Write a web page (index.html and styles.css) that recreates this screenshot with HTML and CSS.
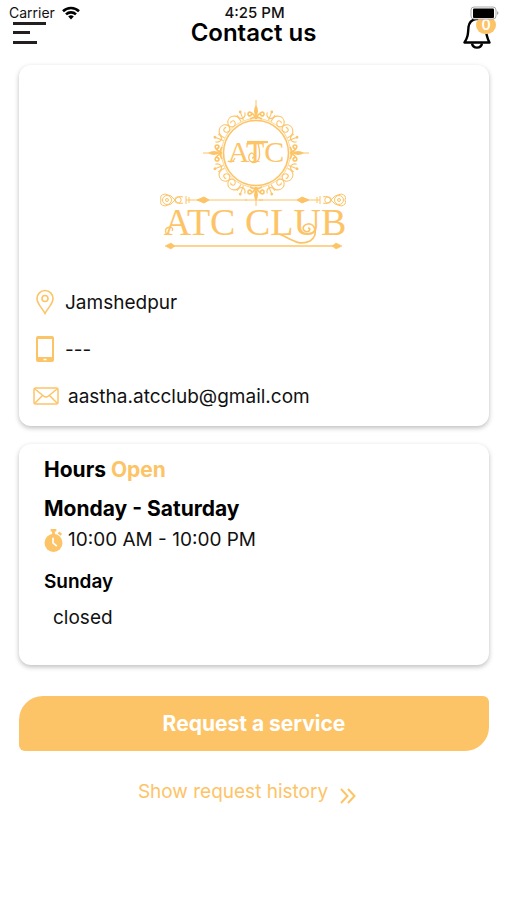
FILE: index.html
```html
<!DOCTYPE html>
<html lang="en">
<head>
    <meta charset="UTF-8">
    <meta name="viewport" content="width=device-width, initial-scale=1.0">
    <title>Contact us</title>
    <link rel="stylesheet" href="styles.css">
</head>
<body>
    <div class="status-bar">
        <div class="carrier">
            <span>Carrier</span>
            <svg width="20" height="14" viewBox="0 0 20 14" fill="none" stroke="#000" stroke-width="2.6">
                <path d="M2 5.2a11.5 11.5 0 0 1 16 0"/>
                <path d="M5 8.4a7.2 7.2 0 0 1 10 0"/>
                <path d="M7.2 10.6a4 4 0 0 1 5.6 0L10 13.6z" fill="#000" stroke="none"/>
            </svg>
        </div>
        <span class="clock">4:25 PM</span>
        <svg class="battery" width="30" height="14" viewBox="0 0 30 14">
            <rect x="1" y="1" width="25" height="12" rx="3" fill="#fff" stroke="#aaa"/>
            <rect x="3" y="2.500" width="21" height="9.500" rx="1"/>
            <path d="M27 5q3 2 0 4z" fill="#aaa"/>
        </svg>
    </div>

    <header class="header">
        <button class="icon-button" aria-label="Menu">
            <svg width="34" height="24" viewBox="0 0 34 24" fill="#231f20">
                <rect y="1" width="33" height="3"/>
                <rect y="10" width="17" height="3"/>
                <rect y="20" width="24" height="3"/>
            </svg>
        </button>
        <h1>Contact us</h1>
        <button class="icon-button bell" aria-label="Notifications">
            <svg width="28" height="32" viewBox="0 0 28 32" fill="none" stroke="#000" stroke-width="2.400" stroke-linejoin="round">
                <path d="M13 2C8 3 6 6 5.500 10C5 17 5 20 1.500 25.500H26.500C23.500 20 23 17 22.500 10C22 6 19 3 15 2z"/>
                <path d="M9 26.500c1 5.500 9 5.500 10 0"/>
            </svg>
            <span class="badge">0</span>
        </button>
    </header>

    <main>
        <section class="card contact">
            <svg class="logo" width="210" height="170" viewBox="0 0 210 170" fill="none" stroke="#fdc467">
                <defs>
                    <g id="fleur">
                        <path d="M0-53V-36" stroke-width="1"/>
                        <path d="M0-48q-4 6 0 12q4-6 0-12z" fill="#fdc467" stroke="none"/>
                        <path d="M0-34C-2-40-8-43-8-39C-8-36-4-37-5-39M0-34C2-40 8-43 8-39C8-36 4-37 5-39" stroke-width="1.700"/>
                        <path d="M-6-34Q0-38 6-34" stroke-width="1.700"/>
                    </g>
                    <g id="scroll">
                        <path d="M-8-34C-11-43-1-47 3-41C6-36-1-32-3-37C-4-40 0-41 1-39" stroke-width="1.100"/>
                    </g>
                    <g id="leaf">
                        <path d="M0-35V-44M0-37Q-4-38-4-42M0-37Q4-38 4-42" stroke-width="1.100"/>
                        <circle cy="-44" r="1.400" fill="#fdc467" stroke="none"/>
                    </g>
                    <g id="quarter">
                        <use href="#fleur"/>
                        <use href="#leaf" transform="rotate(21)"/>
                        <use href="#scroll" transform="rotate(39)"/>
                        <use href="#scroll" transform="scale(-1 1) rotate(-51)"/>
                        <use href="#leaf" transform="rotate(69)"/>
                    </g>
                    <g id="rule-end">
                        <circle cx="18" cy="20" r="4.500"/>
                        <circle cx="18" cy="20" r="1.500"/>
                        <circle cx="29" cy="20" r="3.200"/>
                        <path d="M12 20q-2-5 4-6q7 1 10 6q3 5 8 3M12 20q-2 5 4 6q7-1 10-6q3-5 8-3"/>
                        <path d="M37 16v8M40 17v6M37 20h7"/>
                        <path d="M44 20h54"/>
                        <path d="M48 20l7-3 5 3-5 3z" fill="#fdc467"/>
                    </g>
                </defs>
                <g transform="translate(107 63)">
                    <circle r="32.500" stroke-width="1.600"/>
                    <circle r="34.500" stroke-width="0.700"/>
                    <use href="#quarter"/>
                    <use href="#quarter" transform="rotate(90)"/>
                    <use href="#quarter" transform="rotate(180)"/>
                    <use href="#quarter" transform="rotate(270)"/>
                    <path d="M-9-11H12" stroke-width="2.200"/>
                    <path d="M2-10C5 2 4 10-3 9.500C-9 8-8 0-4 0C-1 1-1 5-4 5" stroke-width="1.300"/>
                    <path d="M-21 5q-3 6-7 3" stroke-width="1.200"/>
                </g>
                <text class="monogram" x="107" y="72">ATC</text>
                <g stroke-width="1">
                    <use href="#rule-end" transform="translate(0 90)"/>
                    <use href="#rule-end" transform="translate(208 90) scale(-1 1)"/>
                    <path d="M96 110h18"/>
                </g>
                <text class="club-name" x="106" y="145">ATC CLUB</text>
                <path d="M18 145q-4-7 3-8q4 1 2 4" stroke-width="1.300"/>
                <path d="M130 144C139 147 149 157 161 151C170 145 166 133 159 134C151 135 154 144 160 141Q162 138 159 138" stroke-width="1.700"/>
                <path d="M18 156H191" stroke-width="1.300"/>
                <path d="M16 156l6-3 4 3-4 3zM193 156l-6-3-4 3 4 3z" fill="#fdc467" stroke-width="0.600"/>
            </svg>

            <ul class="contact-list">
                <li>
                    <svg width="22" height="26" viewBox="0 0 22 26" fill="none" stroke="#fdc467" stroke-width="1.600">
                        <path d="M11 24.500C8 18.500 3 15 3 9.500a8 8 0 0 1 16 0C19 15 14 18.500 11 24.500z"/>
                        <circle cx="11" cy="9.500" r="3"/>
                    </svg>
                    <span>Jamshedpur</span>
                </li>
                <li>
                    <svg width="22" height="28" viewBox="0 0 22 28">
                        <path fill="#fdc467" fill-rule="evenodd" d="M4 1h14q2 0 2 2v22q0 2-2 2H4q-2 0-2-2V3q0-2 2-2zM4 4v18h14V4z"/>
                        <path d="M9.500 24.500h3" stroke="#fff" stroke-width="1.500"/>
                    </svg>
                    <span>---</span>
                </li>
                <li>
                    <svg class="wide" width="26" height="18" viewBox="0 0 26 18" fill="none" stroke="#fdc467" stroke-width="1.500">
                        <rect x="1" y="1" width="24" height="16" rx="1.500"/>
                        <path d="M2 2l8.500 7q2.500 2 5 0L24 2M2 16l7.500-7.500M24 16l-7.500-7.500"/>
                    </svg>
                    <span>aastha.atcclub@gmail.com</span>
                </li>
            </ul>
        </section>

        <section class="card hours">
            <h2>Hours <span class="open">Open</span></h2>
            <h2>Monday - Saturday</h2>
            <p class="time">
                <svg width="19" height="23" viewBox="0 0 20 24" fill="#fdc467">
                    <circle cx="10" cy="14.500" r="9.500"/>
                    <path d="M7 0h6v2.500h-1.500V6h-3V2.500H7zM16 2.500l3 2.500-1.500 2-3-2.500z"/>
                    <path d="M9.500 9v5.500l4 3.500" fill="none" stroke="#fff" stroke-width="1.800"/>
                </svg>
                <span>10:00 AM - 10:00 PM</span>
            </p>
            <h3>Sunday</h3>
            <p class="closed">closed</p>
        </section>

        <button class="request">Request a service</button>

        <a class="history" href="#">
            <span>Show request history</span>
            <svg width="16" height="16" viewBox="0 0 16 16" fill="none" stroke="#fdc467" stroke-width="2">
                <path d="M1 1l6.500 7L1 15M8 1l6.500 7L8 15"/>
            </svg>
        </a>
    </main>
</body>
</html>
```
FILE: styles.css
```css
body {
    font-family: Inter, 'Liberation Sans', sans-serif;
    background-color: #fff;
    color: #111;
    margin: 0;
}

h1, h2, h3, p, ul {
    margin: 0;
    padding: 0;
}

button {
    font-family: inherit;
    border: none;
    cursor: pointer;
}

svg {
    display: block;
    flex-shrink: 0;
}

.status-bar {
    position: relative;
    z-index: 1;
    display: grid;
    grid-template-columns: 1fr auto 1fr;
    align-items: end;
    height: 20px;
    padding: 0 7px 0 9px;
    font-size: 14px;
    line-height: 14px;
}

.carrier {
    display: flex;
    gap: 6px;
}

.clock {
    font-size: 15px;
    font-weight: 500;
}

.battery {
    justify-self: end;
}

.header {
    display: grid;
    grid-template-columns: 1fr auto 1fr;
    grid-template-rows: 26px;
    align-items: center;
    padding: 0 13px;
}

.header h1 {
    font-size: 24px;
    line-height: 26px;
    font-weight: 600;
    color: #000;
}

.icon-button {
    background: none;
    padding: 0;
    justify-self: start;
}

.bell {
    position: relative;
    justify-self: end;
    margin-right: 3px;
}

.badge {
    position: absolute;
    top: -1px;
    right: -5px;
    width: 20px;
    height: 18px;
    border-radius: 10px;
    background-color: #fdc467;
    color: #fff;
    font-size: 14px;
    line-height: 18px;
    font-weight: 600;
}

main {
    display: flex;
    flex-direction: column;
    padding: 19px 18px 0 19px;
}

.card {
    background-color: #fff;
    border-radius: 12px;
    box-shadow: 0 2px 5px rgba(0, 0, 0, 0.26);
    margin-bottom: 18px;
}

.contact {
    padding: 25px 14px 16px;
}

.logo {
    margin: 0 auto 28px;
}

.monogram, .club-name {
    font-family: 'Liberation Serif', serif;
    fill: #fdc467;
    stroke: none;
    text-anchor: middle;
}

.monogram {
    font-size: 30px;
}

.club-name {
    font-size: 38px;
}

.contact-list {
    list-style: none;
    display: flex;
    flex-direction: column;
    gap: 19px;
}

.contact-list li {
    display: flex;
    align-items: center;
    gap: 9px;
    height: 28px;
    padding-left: 1px;
    font-size: 19px;
}

.contact-list .wide {
    margin-left: -1px;
}

.hours {
    padding: 12px 25px 35px;
}

.hours h2 {
    font-size: 21px;
    line-height: 27px;
    font-weight: 700;
    color: #000;
    margin-bottom: 12px;
}

.hours .open {
    color: #fdc467;
}

.hours h2 + h2 {
    margin-bottom: 6px;
}

.hours h3 {
    font-size: 19px;
    line-height: 24px;
    font-weight: 600;
    color: #000;
    margin: 18px 0 12px;
}

.hours p {
    font-size: 19px;
    line-height: 24px;
}

.time {
    display: flex;
    align-items: center;
    gap: 5px;
}

.hours .closed {
    padding-left: 9px;
}

.request {
    height: 55px;
    margin-top: 13px;
    border-radius: 24px 6px 24px 6px;
    background-color: #fdc467;
    color: #fff;
    font-size: 21px;
    font-weight: 700;
}

.history {
    display: flex;
    align-items: center;
    justify-content: center;
    gap: 12px;
    margin-top: 29px;
    padding-right: 14px;
    color: #fdc467;
    font-size: 19px;
    line-height: 24px;
    text-decoration: none;
}

.history svg {
    margin-top: 8px;
}
```
